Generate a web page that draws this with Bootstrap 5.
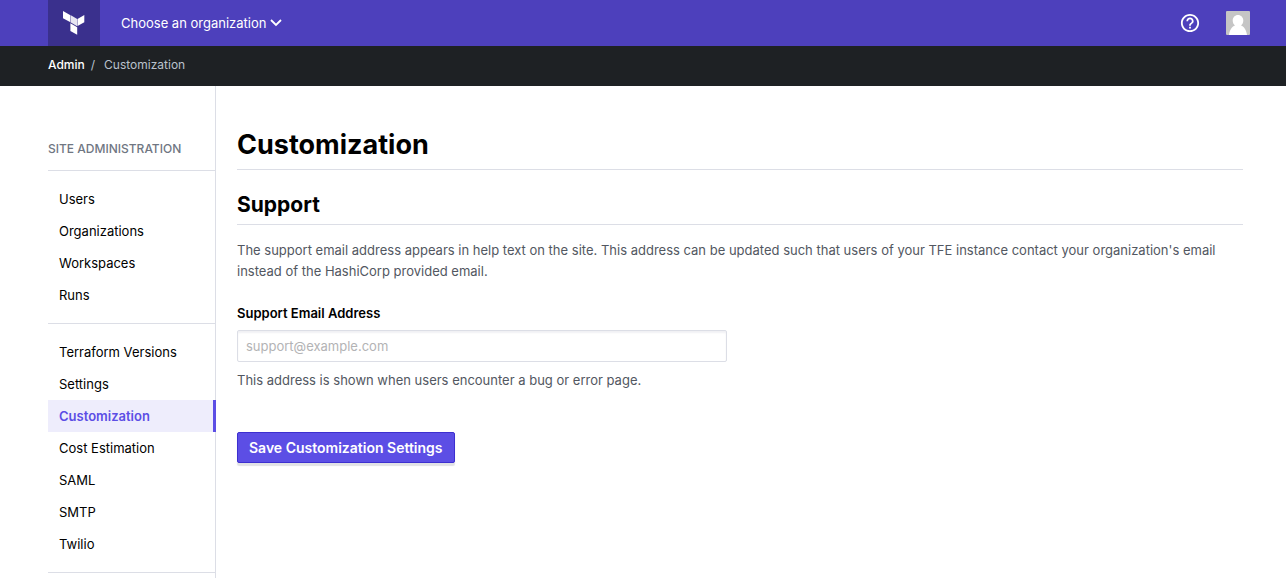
<!DOCTYPE html>
<html lang="en">
<head>
<meta charset="utf-8">
<meta name="viewport" content="width=device-width, initial-scale=1">
<title>Customization</title>
<link href="https://cdn.jsdelivr.net/npm/bootstrap@5.3.0/dist/css/bootstrap.min.css" rel="stylesheet">
<style>
  body { --bs-border-color: #dcdee6; font-family: Inter, "Liberation Sans", sans-serif; font-size: 13px; line-height: 21px; color: #000; }
  .topbar { background: #4d40bc; height: 46px; padding: 0 36px 0 48px; }
  .brand { background: #3a308d; width: 52px; }
  .org-toggle { color: #fff; font-size: 13px; line-height: 20px; gap: 4px; margin-left: 21px; }
  .org-toggle:hover { color: #fff; }
  .account { gap: 26px; }
  .crumbs { background: #1e2124; height: 40px; padding: 9px 48px; line-height: 20px; }
  .crumbs a { color: #fff; font-weight: 500; }
  .crumbs .breadcrumb { font-size: 12px; --bs-breadcrumb-divider-color: #bac1cc; --bs-breadcrumb-item-active-color: #bac1cc; --bs-breadcrumb-item-padding-x: 6px; }
  .crumbs .breadcrumb-item + .breadcrumb-item::before { padding-right: 9px; }
  .shell { padding: 0 43px 0 48px; }
  .sidebar { width: 168px; border-right: 1px solid #dcdee6; padding-top: 53px; }
  .side-title { color: #6f7682; font-size: 12px; line-height: 20px; font-weight: 500; padding-bottom: 11px; }
  .side-group { border-top: 1px solid #dcdee6; padding: 12px 0; }
  .side-group .nav-link { color: #000; padding: 6px 11px; line-height: 20px; }
  .side-group .nav-link.active { color: #5c4ee5; background: #eeedfc; font-weight: 600; border-right: 3px solid #5c4ee5; margin-right: -1px; }
  .content { padding: 39px 0 40px 21px; }
  h1 { font-size: 27px; line-height: 40px; font-weight: 700; padding-bottom: 4px; border-bottom: 1px solid #dcdee6; margin-bottom: 20px; }
  h2 { font-size: 21px; line-height: 30px; font-weight: 700; padding-bottom: 4px; border-bottom: 1px solid #dcdee6; margin-bottom: 15px; }
  .muted-copy { color: #525761; }
  .intro { margin-bottom: 21px; }
  .field { max-width: 490px; margin-bottom: 41px; }
  .field .form-label { font-weight: 600; margin-bottom: 7px; line-height: 20px; }
  .field .form-control { height: 32px; padding: 4px 8px; font-size: 13px; border-color: #dcdee6; border-radius: 2px; box-shadow: inset 0 2px 2px #f1f1f4; }
  .field .form-control::placeholder { color: #b3b3b5; }
  .save { background: #5c4ee5; border: 1px solid #3d2fd0; border-radius: 2px; color: #fff; font-size: 14px; font-weight: 600; line-height: 20px; padding: 5px 11px 4px; box-shadow: 0 3px 1px #e1e2e5; }
  .save:hover { background: #4d40bc; color: #fff; }
</style>
</head>
<body class="d-flex flex-column min-vh-100">
<header>
  <nav class="topbar d-flex align-items-center" aria-label="Main">
    <a class="brand d-flex align-items-center justify-content-center align-self-stretch" href="#" aria-label="Home">
      <svg width="24" height="26" viewBox="0 0 24 26" fill="#fff" aria-hidden="true">
        <path d="M1 1l7 3.900v7.200L1 8.300z"/>
        <path d="M8.400 5.100l6.800 3.800v7.300l-6.800-3.900z" opacity=".88"/>
        <path d="M15.500 8.900L22.300 5.100v7.200l-6.800 3.800z"/>
        <path d="M8.400 13.300l6.800 3.900v7.500l-6.800-3.800z"/>
      </svg>
    </a>
    <button class="org-toggle btn border-0 p-0 d-flex align-items-center" type="button">Choose an organization
      <svg width="12" height="8" viewBox="0 0 12 8" fill="none" stroke="#fff" stroke-width="1.800" aria-hidden="true"><path d="M1 1l5 5 5-5"/></svg>
    </button>
    <div class="account d-flex align-items-center ms-auto">
      <button class="btn border-0 p-0 d-flex" type="button" aria-label="Help">
        <svg width="20" height="20" viewBox="1 1 22 22" fill="#fff" aria-hidden="true"><path d="M11 18h2v-2h-2v2zm1-16C6.480 2 2 6.480 2 12s4.480 10 10 10 10-4.480 10-10S17.520 2 12 2zm0 18c-4.410 0-8-3.590-8-8s3.590-8 8-8 8 3.590 8 8-3.590 8-8 8zm0-14c-2.210 0-4 1.790-4 4h2c0-1.100.9-2 2-2s2 .9 2 2c0 2-3 1.750-3 5h2c0-2.250 3-2.500 3-5 0-2.210-1.790-4-4-4z"/></svg>
      </button>
      <button class="btn border-0 p-0 d-flex" type="button" aria-label="Account">
        <svg width="24" height="24" viewBox="0 0 24 24" aria-hidden="true"><rect width="24" height="24" rx="1" fill="#c5c5c5"/><path fill="#fff" d="M12 4c3 0 5.300 2.400 5.300 5.500 0 2.100-.9 4-2.300 5 3.300 1.200 5.400 4.800 6 9.500H3c.6-4.700 2.700-8.300 6-9.500-1.400-1-2.300-2.900-2.300-5C6.700 6.400 9 4 12 4z"/></svg>
      </button>
    </div>
  </nav>
  <nav class="crumbs" aria-label="Breadcrumb">
    <ol class="breadcrumb mb-0">
      <li class="breadcrumb-item"><a class="text-decoration-none" href="#">Admin</a></li>
      <li class="breadcrumb-item active" aria-current="page">Customization</li>
    </ol>
  </nav>
</header>
<div class="shell d-flex flex-grow-1">
  <aside class="sidebar flex-shrink-0">
    <div class="side-title text-uppercase">Site Administration</div>
    <nav class="side-group nav flex-column" aria-label="Accounts">
      <a class="nav-link" href="#">Users</a>
      <a class="nav-link" href="#">Organizations</a>
      <a class="nav-link" href="#">Workspaces</a>
      <a class="nav-link" href="#">Runs</a>
    </nav>
    <nav class="side-group nav flex-column border-bottom" aria-label="Configuration">
      <a class="nav-link" href="#">Terraform Versions</a>
      <a class="nav-link" href="#">Settings</a>
      <a class="nav-link active" href="#" aria-current="page">Customization</a>
      <a class="nav-link" href="#">Cost Estimation</a>
      <a class="nav-link" href="#">SAML</a>
      <a class="nav-link" href="#">SMTP</a>
      <a class="nav-link" href="#">Twilio</a>
    </nav>
  </aside>
  <main class="content flex-grow-1">
    <h1>Customization</h1>
    <h2>Support</h2>
    <p class="intro muted-copy">The support email address appears in help text on the site. This address can be updated such that users of your TFE instance contact your organization's email instead of the HashiCorp provided email.</p>
    <form>
      <div class="field">
        <label class="form-label d-block" for="support-email">Support Email Address</label>
        <input class="form-control" id="support-email" type="email" placeholder="support@example.com" aria-describedby="support-help">
        <div class="muted-copy mt-2" id="support-help">This address is shown when users encounter a bug or error page.</div>
      </div>
      <button class="save btn" type="submit">Save Customization Settings</button>
    </form>
  </main>
</div>
</body>
</html>
